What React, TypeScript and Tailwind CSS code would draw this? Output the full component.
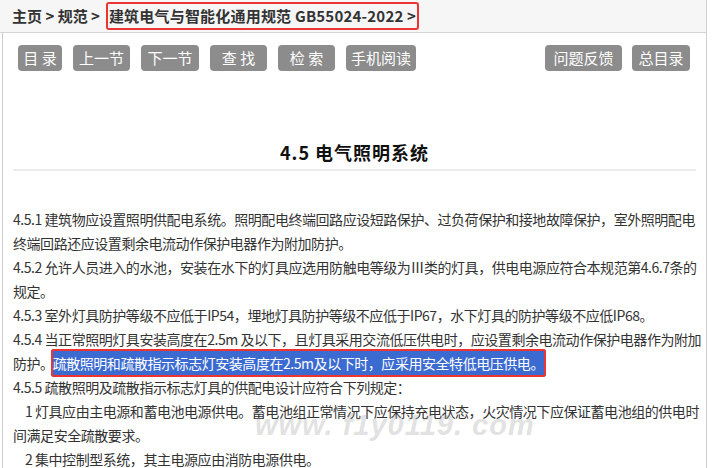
import type { ReactNode } from 'react'

const leftButtons = [
  { label: '目 录', width: 'w-[44px]' },
  { label: '上一节', width: 'w-[57px]' },
  { label: '下一节', width: 'w-[58px]' },
  { label: '查 找', width: 'w-[57px]' },
  { label: '检 索', width: 'w-[57px]' },
  { label: '手机阅读', width: 'w-[70px]' },
]

const rightButtons = [
  { label: '问题反馈', width: 'w-[77px]' },
  { label: '总目录', width: 'w-[58px]' },
]

function NavButton({ label, width }: { label: string; width: string }) {
  return (
    <button
      type="button"
      className={`${width} h-[26px] rounded-[4px] bg-[#8c8c8c] text-[15px] leading-[26px] text-white`}
    >
      {label}
    </button>
  )
}

function Line({ children, indent = false }: { children: ReactNode; indent?: boolean }) {
  return <p className={indent ? 'indent-[12px] whitespace-nowrap' : 'whitespace-nowrap'}>{children}</p>
}

export default function App() {
  return (
    <div className="relative h-[468px] w-[707px] overflow-hidden border-r border-[#cfcfcf] bg-white font-['Noto_Sans_CJK_SC','Noto_Sans',sans-serif] text-[#333]">
      <div className="flex h-[33px] items-center border-b border-[#d4d4d4] bg-[#f6f6f6] pl-[12px] text-[15px] font-bold text-[#333]">
        <span>主页 &gt; 规范 &gt;</span>
        <span className="ml-[6px] rounded-[3px] border-2 border-[#e33] px-[1px] leading-[24px] tracking-[0.2px]">
          建筑电气与智能化通用规范 GB55024-2022 &gt;
        </span>
      </div>

      <div className="ml-[2px] border-l border-[#cfcfcf]">
        <div className="flex justify-between pt-[12px] pl-[15px] pr-[16px]">
          <div className="flex gap-[11px]">
            {leftButtons.map((b) => (
              <NavButton key={b.label} {...b} />
            ))}
          </div>
          <div className="flex gap-[10px]">
            {rightButtons.map((b) => (
              <NavButton key={b.label} {...b} />
            ))}
          </div>
        </div>

        <h1 className="mt-[69px] text-center text-[18px] font-bold leading-[24px] tracking-[1px] text-[#111]">
          4.5 电气照明系统
        </h1>
        <div className="mx-[10px] mt-[5px] h-[2px] bg-[#ececec]" />

        <div className="mt-[36px] pl-[10px] text-[14px] leading-[24px] tracking-[-0.45px]">
          <Line>
            4.5.1 建筑物应设置照明供配电系统。照明配电终端回路应设短路保护、过负荷保护和接地故障保护，室外照明配电
            <br />
            终端回路还应设置剩余电流动作保护电器作为附加防护。
          </Line>
          <Line>
            4.5.2 允许人员进入的水池，安装在水下的灯具应选用防触电等级为Ⅲ类的灯具，供电电源应符合本规范第4.6.7条的
            <br />
            规定。
          </Line>
          <Line>4.5.3 室外灯具防护等级不应低于IP54，埋地灯具防护等级不应低于IP67，水下灯具的防护等级不应低IP68。</Line>
          <Line>
            4.5.4 当正常照明灯具安装高度在2.5m 及以下，且灯具采用交流低压供电时，应设置剩余电流动作保护电器作为附加
            <br />
            防护。
            <span className="-ml-[3px] rounded-[3px] border-2 border-[#e33] bg-[#3b6bd0] py-[2px] text-white">
              疏散照明和疏散指示标志灯安装高度在2.5m及以下时，应采用安全特低电压供电。
            </span>
          </Line>
          <Line>4.5.5 疏散照明及疏散指示标志灯具的供配电设计应符合下列规定：</Line>
          <Line indent>
            1 灯具应由主电源和蓄电池电源供电。蓄电池组正常情况下应保持充电状态，火灾情况下应保证蓄电池组的供电时
            <br />
            间满足安全疏散要求。
          </Line>
          <Line indent>2 集中控制型系统，其主电源应由消防电源供电。</Line>
        </div>
      </div>

      <div className="pointer-events-none absolute left-[255px] top-[404px] font-['Liberation_Sans',sans-serif] text-[29px] font-bold italic tracking-[1px] text-[#9a9a9a]/30">
        www. f1y0119. com
      </div>
    </div>
  )
}
